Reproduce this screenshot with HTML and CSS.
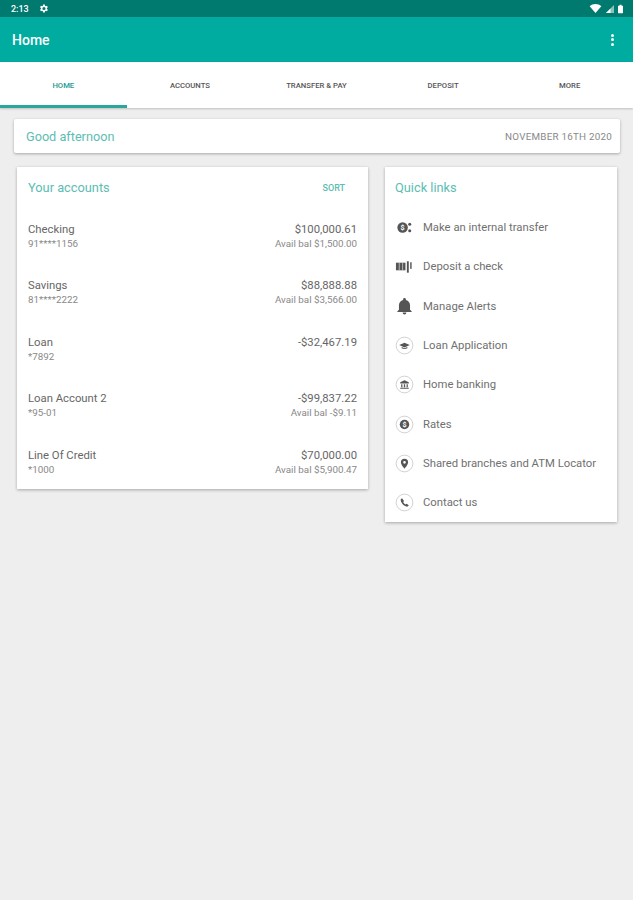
FILE: index.html
```html
<!DOCTYPE html>
<html lang="en">
<head>
<meta charset="UTF-8">
<title>Home</title>
<link rel="stylesheet" href="styles.css">
</head>
<body>

<div class="status-bar">
    <div class="status-left">
        <span class="status-time">2:13</span>
        <svg class="status-gear" width="11" height="11" viewBox="0 0 24 24"><path fill="#fff" d="M19.4 13a7.5 7.5 0 0 0 0-2l2.1-1.6-2-3.5-2.5 1a7.5 7.5 0 0 0-1.7-1L15 3.2h-4l-.4 2.700a7.5 7.5 0 0 0-1.7 1l-2.5-1-2 3.5L6.5 11a7.5 7.5 0 0 0 0 2l-2.1 1.6 2 3.5 2.5-1a7.5 7.5 0 0 0 1.7 1l.4 2.7h4l.4-2.7a7.5 7.5 0 0 0 1.7-1l2.5 1 2-3.5zM13 15.5a3.5 3.5 0 1 1 0-7 3.5 3.5 0 0 1 0 7z"/></svg>
    </div>
    <div class="status-right">
        <svg width="13" height="9" viewBox="0 0 13 10"><path fill="#fff" d="M0 2.6C3.6-.8 9.4-.8 13 2.6L6.5 10z"/></svg>
        <svg width="8" height="8" viewBox="0 0 8 8"><path fill="#fff" opacity=".55" d="M8 0v8H0z"/><path fill="#fff" d="M4.500 3.5V8H0z"/></svg>
        <svg class="status-battery" width="5" height="10" viewBox="0 0 6 10"><path fill="#fff" d="M1.8 0h2.400v1H5.500a.5.5 0 0 1 .5.5v8a.5.5 0 0 1-.5.5H.5a.5.5 0 0 1-.5-.5v-8A.5.5 0 0 1 .5 1h1.300z"/></svg>
    </div>
</div>

<header class="app-bar">
    <h1>Home</h1>
    <div class="overflow-menu"><span></span><span></span><span></span></div>
</header>

<nav class="tabs">
    <div class="tab active">HOME</div>
    <div class="tab">ACCOUNTS</div>
    <div class="tab">TRANSFER &amp; PAY</div>
    <div class="tab">DEPOSIT</div>
    <div class="tab">MORE</div>
</nav>

<main class="content">
    <div class="greeting-card">
        <span class="greeting">Good afternoon</span>
        <span class="date">NOVEMBER 16TH 2020</span>
    </div>

    <div class="columns">
        <section class="card accounts">
            <div class="card-head">
                <h2>Your accounts</h2>
                <span class="sort">SORT</span>
            </div>
            <div class="account">
                <div><div class="acct-name">Checking</div><div class="acct-sub">91****1156</div></div>
                <div class="acct-right"><div class="acct-name">$100,000.61</div><div class="acct-sub">Avail bal $1,500.00</div></div>
            </div>
            <div class="account">
                <div><div class="acct-name">Savings</div><div class="acct-sub">81****2222</div></div>
                <div class="acct-right"><div class="acct-name">$88,888.88</div><div class="acct-sub">Avail bal $3,566.00</div></div>
            </div>
            <div class="account">
                <div><div class="acct-name">Loan</div><div class="acct-sub">*7892</div></div>
                <div class="acct-right"><div class="acct-name">-$32,467.19</div></div>
            </div>
            <div class="account">
                <div><div class="acct-name">Loan Account 2</div><div class="acct-sub">*95-01</div></div>
                <div class="acct-right"><div class="acct-name">-$99,837.22</div><div class="acct-sub">Avail bal -$9.11</div></div>
            </div>
            <div class="account">
                <div><div class="acct-name">Line Of Credit</div><div class="acct-sub">*1000</div></div>
                <div class="acct-right"><div class="acct-name">$70,000.00</div><div class="acct-sub">Avail bal $5,900.47</div></div>
            </div>
        </section>

        <section class="card links">
            <div class="card-head">
                <h2>Quick links</h2>
            </div>
            <div class="link">
                <svg class="link-icon" viewBox="0 0 20 20"><circle cx="8" cy="10" r="5.500" fill="#555"/><text x="8" y="12.800" font-size="7.500" font-weight="700" text-anchor="middle" fill="#fff" font-family="Roboto, sans-serif">$</text><circle cx="15.500" cy="6.500" r="1.600" fill="#555"/><circle cx="15.500" cy="13.500" r="1.600" fill="#555"/></svg>
                <span>Make an internal transfer</span>
            </div>
            <div class="link">
                <svg class="link-icon" viewBox="0 0 20 20"><rect x="1" y="6" width="10" height="8" fill="#555"/><path d="M4.500 6v8M8 6v8" stroke="#fff" stroke-width=".6"/><rect x="12.500" y="4.500" width="2" height="12" fill="#555"/><rect x="16" y="5.500" width="1.500" height="7" fill="#555"/></svg>
                <span>Deposit a check</span>
            </div>
            <div class="link">
                <svg class="link-icon" viewBox="0 0 24 24"><path fill="#555" d="M12 22a2.400 2.400 0 0 0 2.400-2.400H9.600A2.400 2.400 0 0 0 12 22zm7-6v-5.500c0-3.300-1.900-6-5.200-6.800V3a1.800 1.800 0 0 0-3.600 0v.7C6.900 4.500 5 7.200 5 10.500V16l-2 2v1h18v-1z"/></svg>
                <span>Manage Alerts</span>
            </div>
            <div class="link">
                <svg class="link-icon" viewBox="0 0 20 20"><circle cx="10" cy="10" r="8.800" fill="none" stroke="#bbb" stroke-width=".7"/><path fill="#555" d="M10 7 4.500 9.500 10 12l5.500-2.500z"/><path fill="#555" d="M7 11.500v1.500c1.800 1 4.200 1 6 0v-1.500L10 13z"/></svg>
                <span>Loan Application</span>
            </div>
            <div class="link">
                <svg class="link-icon" viewBox="0 0 20 20"><circle cx="10" cy="10" r="8.800" fill="none" stroke="#bbb" stroke-width=".7"/><path fill="#555" d="M10 5.500 5.500 7.500V9h9V7.500zM6.500 9.800h1.300v3H6.500zM9.300 9.800h1.400v3H9.300zM12.200 9.800h1.300v3h-1.300zM5.500 13.300h9v1.300h-9z"/></svg>
                <span>Home banking</span>
            </div>
            <div class="link">
                <svg class="link-icon" viewBox="0 0 20 20"><circle cx="10" cy="10" r="8.800" fill="none" stroke="#bbb" stroke-width=".7"/><circle cx="10" cy="10" r="5" fill="#555"/><text x="10" y="12.800" font-size="7.500" font-weight="700" text-anchor="middle" fill="#fff" font-family="Roboto, sans-serif">$</text></svg>
                <span>Rates</span>
            </div>
            <div class="link">
                <svg class="link-icon" viewBox="0 0 20 20"><circle cx="10" cy="10" r="8.800" fill="none" stroke="#bbb" stroke-width=".7"/><path fill="#555" fill-rule="evenodd" d="M10 5a3.800 3.800 0 0 0-3.800 3.800C6.200 11.500 10 15.500 10 15.500s3.800-4 3.800-6.700A3.800 3.800 0 0 0 10 5zm0 5.200a1.400 1.400 0 1 1 0-2.800 1.400 1.400 0 0 1 0 2.800z"/></svg>
                <span>Shared branches and ATM Locator</span>
            </div>
            <div class="link">
                <svg class="link-icon" viewBox="0 0 20 20"><circle cx="10" cy="10" r="8.800" fill="none" stroke="#bbb" stroke-width=".7"/><path fill="#555" d="M7.400 5.500 6 6.500c-.3 3.600 3.500 7.800 7.500 7.800l1-1.500-2.300-1.500-1.100.8c-1.100-.6-2-1.600-2.500-2.700l.9-1z"/></svg>
                <span>Contact us</span>
            </div>
        </section>
    </div>
</main>

</body>
</html>
```

FILE: styles.css
```css
/* Base */
body {
    margin: 0;
    height: 900px;
    overflow: hidden;
    background-color: #eeeeee;
    font-family: Roboto, "Liberation Sans", sans-serif;
    color: #555;
}

/* Status bar */
.status-bar {
    height: 17px;
    background: #00796f;
    display: flex;
    justify-content: space-between;
    align-items: center;
    padding: 0 10px 0 11px;
    color: #fff;
}
.status-left { display: flex; align-items: center; gap: 9px; }
.status-right { display: flex; align-items: center; gap: 4px; }
.status-time { font-size: 9px; font-weight: 500; }
.status-gear { display: block; }

/* App bar */
.app-bar {
    height: 45px;
    background: #00aca0;
    display: flex;
    justify-content: space-between;
    align-items: center;
    padding: 0 19px 0 12px;
}
.app-bar h1 {
    margin: 0;
    font-size: 14px;
    font-weight: 500;
    color: #fff;
}
.overflow-menu { display: flex; flex-direction: column; gap: 1.5px; }
.overflow-menu span {
    display: block;
    width: 3px;
    height: 3px;
    border-radius: 50%;
    background: #fff;
}

/* Tabs */
.tabs {
    height: 46px;
    background: #fff;
    display: grid;
    grid-template-columns: repeat(5, 1fr);
    box-shadow: 0 1px 2px rgba(0,0,0,0.2);
}
.tab {
    display: flex;
    align-items: center;
    justify-content: center;
    padding-top: 3px;
    font-size: 7.7px;
    font-weight: 500;
    color: #555;
    border-bottom: 3px solid transparent;
}
.tab.active {
    color: #1d9a90;
    border-bottom-color: #2aa69c;
}

/* Content */
.content { padding: 11px 13px 0 14px; }

.greeting-card {
    height: 34px;
    background: #fff;
    border-radius: 2px;
    box-shadow: 0 1px 3px rgba(0,0,0,0.3);
    display: flex;
    justify-content: space-between;
    align-items: center;
    padding: 0 8px 0 12px;
}
.greeting { font-size: 12.7px; color: #5dbdb3; }
.date { font-size: 9.8px; color: #888; letter-spacing: 0.25px; }

.columns {
    display: flex;
    align-items: flex-start;
    gap: 17px;
    margin: 14px 3px 0 3px;
}

.card {
    background: #fff;
    box-shadow: 0 1px 3px rgba(0,0,0,0.3);
}
.accounts { width: 351px; height: 322px; padding: 0 11px; box-sizing: border-box; }
.links { width: 232px; height: 355px; padding: 0 10px; box-sizing: border-box; }

.card-head {
    height: 41px;
    display: flex;
    justify-content: space-between;
    align-items: center;
}
.card-head h2 {
    margin: 0;
    font-size: 12.8px;
    font-weight: 400;
    color: #5dbdb3;
}
.sort {
    font-size: 9px;
    font-weight: 500;
    color: #5dbdb3;
    margin-right: 12px;
}

/* Account rows */
.account {
    height: 56.4px;
    padding-top: 15px;
    box-sizing: border-box;
    display: flex;
    justify-content: space-between;
}
.acct-name { font-size: 11.3px; line-height: 14px; color: #666; }
.acct-sub { font-size: 9.8px; line-height: 13px; color: #888; }
.acct-right { text-align: right; }

/* Quick links */
.link {
    height: 39.3px;
    display: flex;
    align-items: center;
    gap: 9px;
    font-size: 11.3px;
    color: #707070;
}
.link-icon { width: 19px; height: 19px; flex: none; }
```
